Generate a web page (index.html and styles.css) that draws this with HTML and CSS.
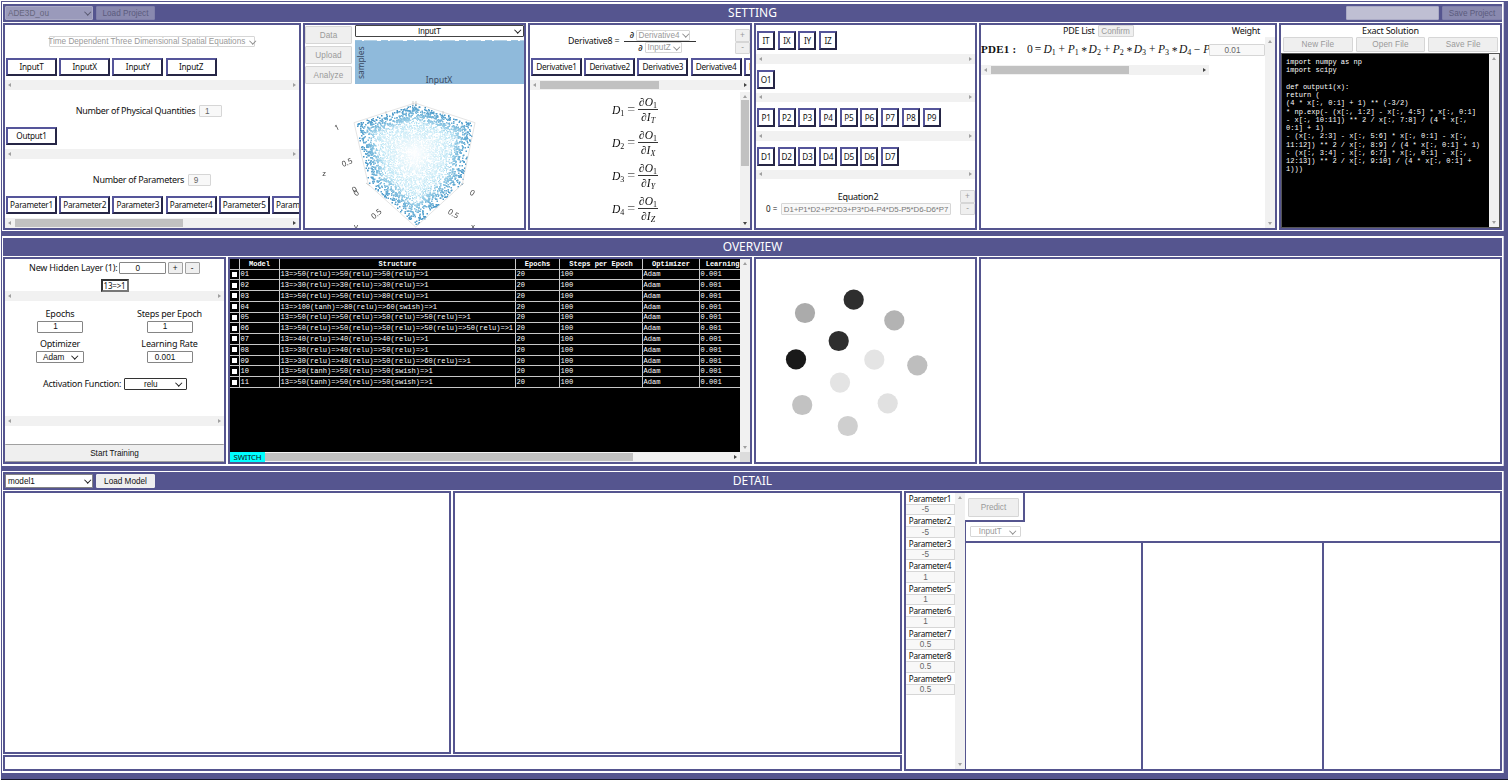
FILE: index.html
```html
<!DOCTYPE html>
<html lang="en">
<head>
<meta charset="utf-8">
<title>PDE workbench</title>
<link rel="stylesheet" href="styles.css">
</head>
<body>
<section class="sec sec1">
  <header class="bar">
    <div class="bar-l"><span class="sel left dim big">ADE3D_ou</span><span class="btn dim proj">Load Project</span></div>
    <h1>SETTING</h1>
    <div class="bar-r"><span class="inp dim name"></span><span class="btn dim save">Save Project</span></div>
  </header>
  <div class="row row1">
    <div class="panel vars">
      <div class="center eqtype"><span class="sel off">Time Dependent Three Dimensional Spatial Equations</span></div>
      <div class="items"><b>InputT</b><b>InputX</b><b>InputY</b><b>InputZ</b></div>
      <div class="sb"></div>
      <div class="center count wider"><span>Number of Physical Quantities</span><span class="inp off">1</span></div>
      <div class="items"><b>Output1</b></div>
      <div class="sb"></div>
      <div class="center count"><span>Number of Parameters</span><span class="inp off">9</span></div>
      <div class="items"><b>Parameter1</b><b>Parameter2</b><b>Parameter3</b><b>Parameter4</b><b>Parameter5</b><b>Parameter6</b></div>
      <div class="sb on"><i class="w168"></i></div>
    </div>

    <div class="panel sampling">
      <div class="sampling-top">
        <div class="stack"><span class="btn off">Data</span><span class="btn off">Upload</span><span class="btn off">Analyze</span></div>
        <div class="hist"><span class="sel">InputT</span><div class="dots"></div>
          <div class="plot"><span class="ylab">samples</span><span class="xlab">InputX</span></div></div>
      </div>
      <div class="cloud">
        <canvas id="cloud" width="220" height="144"></canvas>
        <svg class="axes" width="220" height="144" viewBox="305 84 220 144">
          <path d="M354 122.700L415 103L475 122.700L462.300 184.300L415.700 227L368.300 184.300Z" fill="none" stroke="#ddd" stroke-width=".8"/>
          <path d="M413 101v5M416 101v5M366 183l4 3M460 186l4-3M386 111v3M443 111v3" stroke="#bbb" stroke-width=".7"/>
          <g text-anchor="middle">
            <text transform="translate(338 130) rotate(-25)">1</text>
            <text transform="translate(348 165) rotate(-22)">0.5</text>
            <text x="324" y="176">z</text>
            <text transform="translate(356 192) rotate(-30)">0</text>
            <text transform="translate(358 195) rotate(-40)">0</text>
            <text transform="translate(378 216) rotate(-38)">0.5</text>
            <text transform="translate(471 195) rotate(30)">0</text>
            <text transform="translate(452 216) rotate(32)">0.5</text>
            <text x="356" y="229">y</text>
            <text x="473" y="229">x</text>
          </g>
        </svg>
      </div>
    </div>

    <div class="panel deriv">
      <div class="deriv-top">
        <span class="dl">Derivative8 =</span>
        <div class="dfrac"><div><em>∂</em><span class="sel off s1">Derivative4</span></div><div><em>∂</em><span class="sel off s2">InputZ</span></div></div>
        <div class="pm"><span class="btn off">+</span><span class="btn off">-</span></div>
      </div>
      <div class="items"><b>Derivative1</b><b>Derivative2</b><b>Derivative3</b><b>Derivative4</b><b>Derivative5</b></div>
      <div class="sb on"><i class="w119"></i></div>
      <div class="formulas">
        <div class="flist">
          <div class="fm"><span>D<sub>1</sub></span><u>=</u><span class="fr"><span>∂O<sub>1</sub></span><span>∂I<sub class="it">T</sub></span></span></div>
          <div class="fm"><span>D<sub>2</sub></span><u>=</u><span class="fr"><span>∂O<sub>1</sub></span><span>∂I<sub class="it">X</sub></span></span></div>
          <div class="fm"><span>D<sub>3</sub></span><u>=</u><span class="fr"><span>∂O<sub>1</sub></span><span>∂I<sub class="it">Y</sub></span></span></div>
          <div class="fm"><span>D<sub>4</sub></span><u>=</u><span class="fr"><span>∂O<sub>1</sub></span><span>∂I<sub class="it">Z</sub></span></span></div>
        </div>
        <div class="vsb on"><i></i></div>
      </div>
    </div>

    <div class="panel symbols">
      <div class="keys"><b>IT</b><b>IX</b><b>IY</b><b>IZ</b></div><div class="sb"></div>
      <div class="keys"><b>O1</b></div><div class="sb"></div>
      <div class="keys"><b>P1</b><b>P2</b><b>P3</b><b>P4</b><b>P5</b><b>P6</b><b>P7</b><b>P8</b><b>P9</b></div><div class="sb"></div>
      <div class="keys"><b>D1</b><b>D2</b><b>D3</b><b>D4</b><b>D5</b><b>D6</b><b>D7</b></div><div class="sb"></div>
      <div class="equation">
        <div class="eqbody"><span class="eqname">Equation2</span><div class="eqrow"><span>0 =</span><span class="inp off">D1+P1*D2+P2*D3+P3*D4-P4*D5-P5*D6-D6*P7</span></div></div>
        <div class="pm"><span class="btn off">+</span><span class="btn off">-</span></div>
      </div>
    </div>

    <div class="panel pde">
      <div class="pde-head"><span>PDE List</span><span class="btn off">Confirm</span><span class="wt">Weight</span></div>
      <div class="pde-body">
        <div class="pde-eq">
          <div class="pde-f"><strong>PDE1 :</strong><span class="pf"><q>0 = </q>D<sub>1</sub> + P<sub>1</sub> <s>*</s> D<sub>2</sub> + P<sub>2</sub> <s>*</s> D<sub>3</sub> + P<sub>3</sub> <s>*</s> D<sub>4</sub> − P</span></div>
          <div class="sb on"><i class="w138"></i></div>
        </div>
        <span class="inp off">0.01</span>
        <div class="vsb"></div>
      </div>
    </div>

    <div class="panel exact">
      <div class="title">Exact Solution</div>
      <div class="files"><span class="btn off">New File</span><span class="btn off">Open File</span><span class="btn off">Save File</span></div>
      <div class="code"><pre>import numpy as np
import scipy

def output1(x):
return (
(4 * x[:, 0:1] + 1) ** (-3/2)
* np.exp(- (x[:, 1:2] - x[:, 4:5] * x[:, 0:1]
- x[:, 10:11]) ** 2 / x[:, 7:8] / (4 * x[:,
0:1] + 1)
- (x[:, 2:3] - x[:, 5:6] * x[:, 0:1] - x[:,
11:12]) ** 2 / x[:, 8:9] / (4 * x[:, 0:1] + 1)
- (x[:, 3:4] - x[:, 6:7] * x[:, 0:1] - x[:,
12:13]) ** 2 / x[:, 9:10] / (4 * x[:, 0:1] +
1)))</pre><div class="vsb"></div></div>
    </div>
  </div>
</section>

<section class="sec sec2">
  <header class="bar"><h1>OVERVIEW</h1></header>
  <div class="row row2">
    <div class="panel train">
      <div class="hidden-layer"><span>New Hidden Layer (1):</span><span class="inp">0</span><span class="btn">+</span><span class="btn">-</span></div>
      <div class="center net"><span>13=&gt;1</span></div>
      <div class="sb"></div>
      <div class="fields">
        <label>Epochs</label><label>Steps per Epoch</label>
        <span class="inp">1</span><span class="inp">1</span>
        <label>Optimizer</label><label>Learning Rate</label>
        <span class="sel">Adam</span><span class="inp">0.001</span>
      </div>
      <div class="act"><span>Activation Function:</span><span class="sel">relu</span></div>
      <div class="sb"></div>
      <span class="btn start">Start Training</span>
    </div>
    <div class="panel models">
      <div class="tbl">
        <div class="tbl-view">
          <table>
            <colgroup><col class="c0"><col class="c1"><col class="c2"><col class="c3"><col class="c4"><col class="c5"><col class="c6"></colgroup>
            <tr><th></th><th>Model</th><th>Structure</th><th>Epochs</th><th>Steps per Epoch</th><th>Optimizer</th><th class="cut">Learning</th></tr>
            <tr><td><i></i></td><td>01</td><td>13=&gt;50(relu)=&gt;50(relu)=&gt;50(relu)=&gt;1</td><td>20</td><td>100</td><td>Adam</td><td>0.001</td></tr>
            <tr><td><i></i></td><td>02</td><td>13=&gt;30(relu)=&gt;30(relu)=&gt;30(relu)=&gt;1</td><td>20</td><td>100</td><td>Adam</td><td>0.001</td></tr>
            <tr><td><i></i></td><td>03</td><td>13=&gt;50(relu)=&gt;50(relu)=&gt;80(relu)=&gt;1</td><td>20</td><td>100</td><td>Adam</td><td>0.001</td></tr>
            <tr><td><i></i></td><td>04</td><td>13=&gt;100(tanh)=&gt;80(relu)=&gt;60(swish)=&gt;1</td><td>20</td><td>100</td><td>Adam</td><td>0.001</td></tr>
            <tr><td><i></i></td><td>05</td><td>13=&gt;50(relu)=&gt;50(relu)=&gt;50(relu)=&gt;50(relu)=&gt;1</td><td>20</td><td>100</td><td>Adam</td><td>0.001</td></tr>
            <tr><td><i></i></td><td>06</td><td>13=&gt;50(relu)=&gt;50(relu)=&gt;50(relu)=&gt;50(relu)=&gt;50(relu)=&gt;1</td><td>20</td><td>100</td><td>Adam</td><td>0.001</td></tr>
            <tr><td><i></i></td><td>07</td><td>13=&gt;40(relu)=&gt;40(relu)=&gt;40(relu)=&gt;1</td><td>20</td><td>100</td><td>Adam</td><td>0.001</td></tr>
            <tr><td><i></i></td><td>08</td><td>13=&gt;30(relu)=&gt;40(relu)=&gt;50(relu)=&gt;1</td><td>20</td><td>100</td><td>Adam</td><td>0.001</td></tr>
            <tr><td><i></i></td><td>09</td><td>13=&gt;30(relu)=&gt;40(relu)=&gt;50(relu)=&gt;60(relu)=&gt;1</td><td>20</td><td>100</td><td>Adam</td><td>0.001</td></tr>
            <tr><td><i></i></td><td>10</td><td>13=&gt;50(tanh)=&gt;50(relu)=&gt;50(swish)=&gt;1</td><td>20</td><td>100</td><td>Adam</td><td>0.001</td></tr>
            <tr><td><i></i></td><td>11</td><td>13=&gt;50(tanh)=&gt;50(relu)=&gt;50(swish)=&gt;1</td><td>20</td><td>100</td><td>Adam</td><td>0.001</td></tr>
          </table>
        </div>
        <div class="vsb"></div>
      </div>
      <div class="tbl-foot"><span class="switch">SWITCH</span><div class="sb on"><i class="w368"></i></div><span class="corner"></span></div>
    </div>
    <div class="panel">
      <svg class="bubbles" width="219" height="203" viewBox="756 259 219 203">
        <circle cx="853.700" cy="299.700" r="10.100" fill="#2e2e2e"/>
        <circle cx="805" cy="313" r="10.100" fill="#ababab"/>
        <circle cx="894.300" cy="320.400" r="10.100" fill="#b3b3b3"/>
        <circle cx="838.700" cy="341" r="10.100" fill="#2e2e2e"/>
        <circle cx="796" cy="359.400" r="10.100" fill="#191919"/>
        <circle cx="874.300" cy="359.700" r="10.100" fill="#e4e4e4"/>
        <circle cx="917.300" cy="365.300" r="10.100" fill="#bebebe"/>
        <circle cx="840" cy="382.600" r="10.100" fill="#e4e4e4"/>
        <circle cx="887.700" cy="403.300" r="10.100" fill="#e1e1e1"/>
        <circle cx="802.200" cy="405" r="10.100" fill="#c2c2c2"/>
        <circle cx="847.800" cy="426" r="10.100" fill="#cfcfcf"/>
      </svg>
    </div>
    <div class="panel"></div>
  </div>
</section>

<section class="sec sec3">
  <header class="bar">
    <div class="bar-l"><span class="sel left big">model1</span><span class="btn proj">Load Model</span></div>
    <h1>DETAIL</h1>
  </header>
  <div class="row row3">
    <div class="views">
      <div class="panel"></div><div class="panel"></div><div class="panel wide"></div>
    </div>
    <div class="panel predict">
      <div class="params">
        <label>Parameter1</label><span class="inp off">-5</span>
        <label>Parameter2</label><span class="inp off">-5</span>
        <label>Parameter3</label><span class="inp off">-5</span>
        <label>Parameter4</label><span class="inp off">1</span>
        <label>Parameter5</label><span class="inp off">1</span>
        <label>Parameter6</label><span class="inp off">1</span>
        <label>Parameter7</label><span class="inp off">0.5</span>
        <label>Parameter8</label><span class="inp off">0.5</span>
        <label>Parameter9</label><span class="inp off">0.5</span>
      </div>
      <div class="vsb"></div>
      <div class="result">
        <div class="pbox"><span class="btn off">Predict</span></div>
        <div class="pick"><span class="sel off">InputT</span></div>
        <div class="cols"><div></div><div></div><div></div></div>
      </div>
    </div>
  </div>
</section>
<script src="cloud.js"></script>
</body>
</html>
```
FILE: styles.css
```css
* { box-sizing: border-box; }
body {
  margin: 0; width: 1508px; height: 780px; overflow: hidden;
  background: #55558f; border: solid #fff; border-width: 1px 0 0 1px;
  padding: 1px 4px 0 1px; display: flex; flex-direction: column; gap: 5px;
  box-shadow: inset 0 -1px #15152b;
  font: 9px/12px "Noto Sans", sans-serif; color: #111;
}
.sec { background: #fff; padding: 0 1px; border-right: 1px solid #c9c9dc; flex: none; }
.sec1 { height: 229px; padding-top: 2px; }
.sec2 { height: 230px; padding-top: 2px; }
.sec3 { height: 302px; padding-top: 1px; }
.bar { height: 18px; margin-bottom: 1px; background: #55558f; display: grid; grid-template-columns: 1fr auto 1fr; align-items: center; }
.bar h1 { grid-column: 2; margin: 0; font: 400 12px/16px "Noto Sans", sans-serif; color: #fff; padding-bottom: 1px; }
.bar-l { display: flex; gap: 3px; padding-left: 2px; }
.bar-r { grid-column: 3; display: flex; gap: 3px; justify-content: flex-end; }
.row { display: grid; height: 207px; }
.row1 { grid-template-columns: 300px 225px 226px 225px 300px 223px; }
.row2 { grid-template-columns: 225px 526px 225px 523px; }
.row3 { grid-template-columns: 901px 598px; height: 280px; }
.panel { border: 2px solid #55558f; margin-right: 2px; overflow: hidden; min-width: 0; }
.row > .panel:last-child { margin-right: 0; }
.center { display: flex; justify-content: center; align-items: center; }

/* controls */
.btn, .inp, .sel { display: flex; align-items: center; justify-content: center; font: 8.200px/9px "Liberation Sans", sans-serif; white-space: nowrap; border-radius: 1px; }
.btn { background: #efefef; border: 1px solid #a0a0a0; }
.inp { background: #fff; border: 1px solid #858585; }
.sel { background: #fff; border: 1px solid #858585; padding: 0 3px; }
.sel::after { content: ""; flex: none; width: 4.500px; height: 4.500px; border: solid #111; border-width: 0 1.800px 1.800px 0; transform: translateY(-1px) rotate(45deg) scale(.85); margin: 0 2px 0 8px; }
.off { color: #9a9a9a; border-color: #d6d6d6; }
.inp.off { background: #f8f8f8; color: #666; }
.sel.off::after { border-color: #8a8a8a; }
.left { justify-content: space-between; }
.big { width: 88px; height: 14px; padding: 0 0 0 2px; }
.proj { width: 59px; height: 14px; border-color: #efefef; }
.dim { background: #bfbfd3; border-color: #aaaac5; color: #66667c; }
.btn.dim { background: #8989af; border-color: #8080aa; color: #5b5b7d; }
.sel.dim { background: #9a9abb; }
.sel.dim::after { border-color: #55556c; }
.name { width: 93px; height: 14px; }
.save { width: 60px; height: 14px; }

/* scrollbars */
.sb, .vsb { background: #f1f1f1; display: flex; align-items: center; flex: none; }
.sb { height: 10px; padding: 0 3px; }
.sb::before, .sb::after, .vsb::before, .vsb::after { content: ""; flex: none; border: 2.500px solid transparent; }
.sb::before { border-right: 3px solid #a0a0a0; border-left: 0; margin-right: auto; }
.sb::after { border-left: 3px solid #a0a0a0; border-right: 0; }
.sb.on::before { margin-right: 4px; }
.sb.on::after { margin-left: auto; border-left-color: #444; }
.sb i { height: 8px; background: #c1c1c1; }
.w168 { width: 168px; } .w119 { width: 119px; } .w138 { width: 138px; } .w368 { width: 368px; }
.vsb { width: 10px; flex-direction: column; padding: 3px 0; }
.vsb::before { border-bottom: 3px solid #a0a0a0; border-top: 0; margin-bottom: auto; }
.vsb::after { border-top: 3px solid #a0a0a0; border-bottom: 0; }
.vsb.on::before { margin-bottom: 2px; }
.vsb.on::after { margin-top: auto; border-top-color: #444; }
.vsb i { width: 8px; height: 66px; background: #c1c1c1; }

/* tokens */
.items, .keys { display: flex; padding-left: 1px; gap: 2.200px; overflow: hidden; }
.items b, .keys b { flex: none; border: 2px outset #55559a; background: #fff; font: 400 8.200px/14px "Noto Sans", sans-serif; text-align: center; letter-spacing: -.25px; white-space: nowrap; }
.items b { width: 51px; height: 18px; }
.keys b { width: 18px; height: 19px; line-height: 15px; }
.keys { gap: 2.700px; }

.eqtype { padding-top: 11px; margin-bottom: 11px; }
.eqtype .sel { height: 11px; width: 206px; font-size: 8.200px; letter-spacing: 0; }
.eqtype .sel::after { margin: 0 0 0 5px; }
.vars .sb { margin-top: 4px; }
.count { height: 12px; margin: 15px 0 10px; gap: 4px; padding-left: 0; }
.count span:first-child { letter-spacing: -.3px; }
.count .inp { width: 23px; height: 12px; padding-right: 7px; }
.wider { padding-right: 6px; }
.vars .count + .items { height: 18px; }

.sampling-top { display: flex; gap: 3px; height: 59px; }
.stack { width: 47px; display: flex; flex-direction: column; gap: 2px; padding-top: 1px; }
.stack .btn { flex: 1; letter-spacing: .1px; }
.hist { flex: 1; display: flex; flex-direction: column; }
.hist .sel { height: 12px; border-color: #444; padding: 0 2px 0 12px; display: grid; grid-template-columns: 1fr auto 1fr; }
.hist .sel::before { content: ""; }
.hist .sel::after { margin: 0; justify-self: end; }
.hist .sel { padding-left: 0; padding-right: 3px; text-indent: -17px; }
.dots { height: 1px; margin-top: 3px; background: repeating-linear-gradient(90deg, #9cc3df 0 7px, #fff 7px 9px, #b5d2e6 9px 22px, #fff 22px 26px); }
.plot { flex: 1; background: #8fbadb; color: #3a4a63; display: flex; justify-content: space-between; font-size: 8.500px; }
.ylab { writing-mode: vertical-rl; transform: rotate(180deg); line-height: 11px; padding-bottom: 4px; height: 38px; letter-spacing: -.1px; }
.xlab { flex: 1; padding-right: 12px; text-align: center; align-self: flex-end; line-height: 9px; }
.cloud { display: grid; }
.cloud > * { grid-area: 1 / 1; }
.axes text { font: 7.800px "Noto Sans", sans-serif; fill: #444; }

.deriv-top { display: flex; height: 33px; align-items: center; padding-left: 38px; }
.dl { letter-spacing: -.2px; font-size: 8.800px; width: 56px; white-space: nowrap; margin-top: -2px; }
.dfrac { width: 72px; }
.dfrac > div { display: flex; height: 12px; justify-content: center; align-items: center; gap: 2px; padding-right: 0; }
.dfrac > div:first-child { border-bottom: 1px solid #333; }
.dfrac em { font: 9px/10px "DejaVu Sans", sans-serif; }
.dfrac .sel { height: 11px; padding: 0 1px; }
.dfrac .sel::after { margin: 0 0 0 3px; }
.s1 { width: 54px; } .s2 { width: 37px; }
.pm { width: 15px; margin-left: auto; }
.pm .btn { height: 12.500px; }
.deriv .sb { margin: 4px 0 2px; }
.formulas { display: flex; height: 136px; }
.flist { flex: 1; padding-top: 1px; overflow: hidden; }
.fm { height: 33px; display: flex; align-items: center; justify-content: center; font: italic 11.500px/14px "Liberation Serif", serif; padding-left: 0; }
.fm u { text-decoration: none; font-style: normal; margin: 0 3px; color: #555; font-size: 14px; }
.fr { width: 20px; }
.fr > span { display: block; line-height: 14px; text-align: center; }
.fr > span:first-child { border-bottom: 1px solid #333; line-height: 14px; }
sub { font-size: 8px; font-style: normal; line-height: 0; vertical-align: -2px; }
sub.it { font-style: italic; }

.symbols { padding-top: 6px; }
.symbols .sb { margin: 4px 0 6px; height: 9.500px; }
.equation { display: flex; padding-top: 5px; }
.eqbody { display: flex; flex-direction: column; width: 204px; }
.eqname { text-align: center; line-height: 13px; letter-spacing: -.25px; }
.eqrow { display: flex; align-items: center; padding-left: 10px; gap: 2px; font-size: 8px; }
.eqrow > span:first-child { width: 13px; flex: none; white-space: nowrap; }
.eqrow .inp { width: 170px; height: 12px; color: #777; font-size: 7.800px; letter-spacing: -.06px; }

.pde-head { display: flex; height: 12px; padding-left: 82px; gap: 3px; letter-spacing: -.3px; }
.pde-head .btn { width: 36px; letter-spacing: 0; }
.wt { margin-left: auto; padding-right: 15px; }
.pde-body { display: flex; height: 191px; align-items: flex-start; }
.pde-eq { width: 228px; height: 38px; display: flex; flex-direction: column; justify-content: space-between; flex: none; }
.pde-f { display: flex; height: 26px; overflow: hidden; white-space: nowrap; align-items: center; padding-bottom: 2px; }
.pde-f strong { font: 700 11px/14px "Liberation Serif", serif; width: 46px; flex: none; letter-spacing: .25px; }
.pf { font: italic 11.500px/16px "Liberation Serif", serif; word-spacing: -.7px; letter-spacing: -.04px; flex: 1; overflow: hidden; }
.pf q { quotes: none; font-style: normal; }
.pf s { text-decoration: none; line-height: 0; vertical-align: -2px; }
.pde-body .inp { width: 56px; height: 12px; margin-top: 7px; padding-right: 9px; }
.pde-body > .vsb { height: 100%; margin-left: auto; }

.title { text-align: center; line-height: 12px; letter-spacing: -.2px; }
.files { display: flex; gap: 3px; height: 15px; padding: 0 2px; margin-bottom: 1px; }
.files .btn { flex: 1; letter-spacing: .1px; }
.code { height: 175px; background: #000; border: 1px solid #555; display: flex; justify-content: space-between; }
.code pre { margin: 4px 0 0 4px; color: #fff; font: 7.040px/8.260px "Liberation Mono", monospace; }

.hidden-layer { display: flex; height: 12px; margin-top: 3px; padding-left: 24px; gap: 2px; letter-spacing: -.2px; white-space: nowrap; }
.hidden-layer > span:first-child { width: 88px; }
.hidden-layer .inp { width: 46.500px; padding-right: 9px; }
.hidden-layer .btn { width: 15px; }
.net { height: 14px; margin: 4px 0 -1px; }
.net span { border: 2px solid #666; border-color: #333 #777 #777 #333; width: 28px; height: 13px; font: 8px/9px "Noto Sans", sans-serif; text-align: center; letter-spacing: -.2px; }
.fields { display: grid; grid-template-columns: 110px 109px; justify-items: center; padding-top: 6px; grid-template-rows: 13px 13px 17px 14px; line-height: 12px; letter-spacing: -.2px; align-items: center; }
.fields label:nth-of-type(n+3) { padding-top: 4px; }
.fields .inp { width: 46px; height: 12px; padding-right: 9px; letter-spacing: 0; }
.fields .sel { width: 48px; height: 12px; letter-spacing: 0; padding-left: 6px; }
.act { display: flex; gap: 2px; margin: 14px 0 26px 38px; height: 12px; letter-spacing: -.25px; white-space: nowrap; }
.act > span:first-child { width: 79px; }
.act .sel { width: 63px; letter-spacing: 0; justify-content: space-between; border-color: #333; padding-left: 19px; }
.start { height: 18px; margin-top: 18px; border-width: 1px 0; }

.tbl { display: flex; height: 193px; background: #000; }
.tbl-view { flex: 1; overflow: hidden; }
table { border-collapse: collapse; table-layout: fixed; width: 510px; color: #fff; font: 7.060px/8px "Liberation Mono", monospace; }
.c0 { width: 9px; } .c1 { width: 40px; } .c2 { width: 236px; } .c3 { width: 44px; } .c4 { width: 83px; } .c5 { width: 57px; } .c6 { width: 41px; }
td, th { padding: 0 0 0 1px; border: 1px solid #c8c8c8; height: 10.780px; white-space: nowrap; overflow: hidden; text-align: left; }
th { text-align: center; border-top: 0; font-weight: 700; height: 10px; }
th.cut { text-align: right; }
tr > :first-child { border-left: 0; }
td i { display: block; width: 5px; height: 5px; background: #fff; margin-left: 1px; }
.tbl-foot { display: flex; height: 10px; }
.switch { width: 35px; background: #0ff; font: 7.800px/10px "Noto Sans", sans-serif; text-align: center; letter-spacing: -.2px; }
.tbl-foot .sb { flex: 1; padding-left: 0; }
.tbl-foot .sb::before { display: none; }
.corner { width: 10px; background: #dcdcdc; }
.bubbles { display: block; }

.views { display: grid; grid-template: 263px 16px / 448px 449px; gap: 1px 2px; padding-right: 0; }
.views .panel { margin: 0; }
.wide { grid-column: 1 / 3; }
.predict { display: flex; }
.params { width: 49px; }
.params label, .params .inp { display: flex; justify-content: center; }
.params label { height: 11px; font-size: 8.200px; line-height: 11px; letter-spacing: -.3px; padding-right: 1px; }
.params .inp { height: 11.440px; border-width: 1px 1px 1px 0; padding-right: 9px; }
.result { flex: 1; display: flex; flex-direction: column; }
.pbox { width: 60px; height: 29px; border: solid #55558f; border-width: 0 2px 2px 0; padding: 5px 4px 5px 3px; }
.pbox .btn { height: 19px; }
.pick { height: 21px; border: solid #55558f; border-width: 0 0 2px 1px; padding: 4px 0 0 4px; }
.pick .sel { width: 51px; height: 11px; padding-left: 8px; }
.cols { flex: 1; display: grid; grid-template-columns: 176px 181px 1fr; }
.cols div { border-left: 2px solid #55558f; }
.cols div:first-child { border-left-width: 1px; }
```
FILE: cloud.js
```js
// Scatter of sample points inside the projected cube, lighter towards the middle.
const ctx = document.getElementById("cloud").getContext("2d");
const hull = [[354, 122.7], [415, 103], [475, 122.7], [462.3, 184.3], [415.7, 227], [368.3, 184.3]];
const mid = [414, 152];
let seed = 7;
const rnd = () => (seed = (seed * 16807) % 2147483647) / 2147483647;
const mix = (a, b, t) => a.map((v, i) => Math.round(v + (b[i] - v) * t));
for (let n = 0; n < 6500; n++) {
  const k = Math.floor(rnd() * 6), p = hull[k], q = hull[(k + 1) % 6];
  const t = Math.pow(rnd(), 0.55) * 0.98, s = rnd();
  const x = mid[0] + t * (p[0] + (q[0] - p[0]) * s - mid[0]);
  const y = mid[1] + t * (p[1] + (q[1] - p[1]) * s - mid[1]);
  const c = t < 0.6 ? mix([255, 255, 255], [190, 230, 245], t / 0.6)
                    : mix([185, 228, 244], [62, 145, 197], (t - 0.6) / 0.4);
  if (rnd() < (t - 0.5) * 1.5) continue;
  ctx.fillStyle = `rgb(${c})`;
  const w = t > 0.7 ? 1.5 : 1;
  ctx.fillRect(Math.round((x - 305) * 2) / 2, Math.round((y - 84) * 2) / 2, w, w);
}
```
